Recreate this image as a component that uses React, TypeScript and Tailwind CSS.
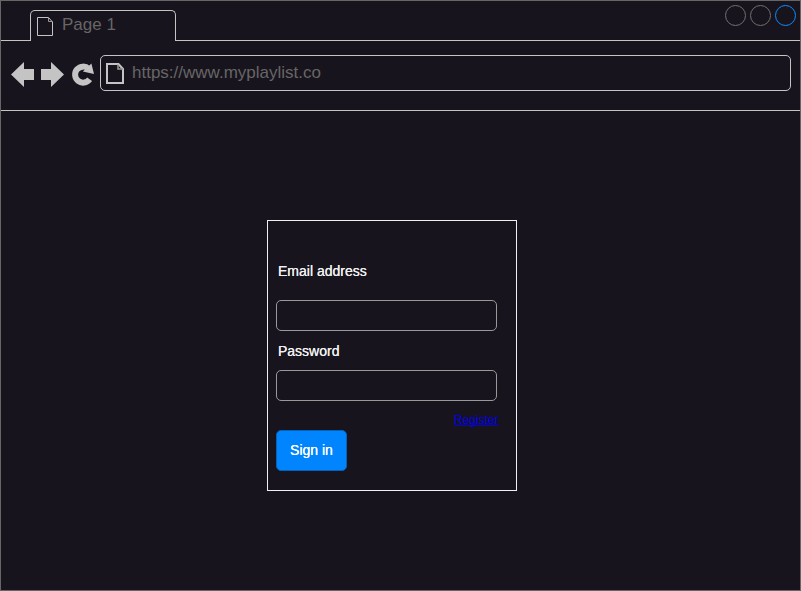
import type { ReactNode } from "react";

function PageIcon({ className, heavy }: { className: string; heavy?: boolean }) {
  return heavy ? (
    <svg className={className} viewBox="0 0 18 21" fill="none">
      <path d="M1 1H12.5L17 6V20H1Z" stroke="#c4c4c4" strokeWidth="2" />
      <path d="M12 1.5V6H17" stroke="#999" strokeWidth="1.5" />
    </svg>
  ) : (
    <svg className={className} viewBox="0 0 16 19" fill="none">
      <path d="M.5 .5H11.5L15.5 5V18.5H.5Z" stroke="#c4c4c4" />
      <path d="M11.5 .5V4.5H15.5" stroke="#999" />
    </svg>
  );
}

function Tab({ children }: { children: ReactNode }) {
  return (
    <div className="mt-[9px] flex h-[31px] w-[146px] rounded-t-[5px] border border-b-0 border-[#c4c4c4] pl-[6px]">
      <PageIcon className="mt-[6px] h-[19px] w-4" />
      <span className="ml-[9px] mt-1 text-[17px] leading-5 text-[#666]">{children}</span>
    </div>
  );
}

function Field({ label, type, className }: { label: string; type: string; className: string }) {
  return (
    <label className={`flex flex-col ${className}`}>
      <span className="pl-[2px] text-[14px] leading-4 text-[#f0f0f0] [text-shadow:0_0_0_#f0f0f0]">{label}</span>
      <input type={type} className="h-[31px] w-[221px] rounded-[5px] border border-[#999] bg-transparent px-2 text-sm text-white outline-none" />
    </label>
  );
}

export default function App() {
  return (
    <div className="flex h-[591px] w-[801px] flex-col overflow-hidden border border-[#666] bg-[#18141d] font-['Liberation_Sans',Arial,sans-serif]">
      <header className="flex h-10 shrink-0">
        <div className="w-[29px] border-b border-[#c4c4c4]" />
        <Tab>Page 1</Tab>
        <div className="flex flex-1 justify-end gap-1 border-b border-[#c4c4c4] pr-[4px] pt-[4px]">
          <span className="size-[21px] rounded-full border border-[#707070]" />
          <span className="size-[21px] rounded-full border border-[#707070]" />
          <span className="size-[21px] rounded-full border border-[#0d8dff]" />
        </div>
      </header>
      <nav className="flex h-[70px] shrink-0 border-b border-[#c4c4c4] pl-[10px] pt-[14px]">
        <svg className="mt-[7px] h-[25px] w-[83px]" viewBox="0 0 83 25" fill="#c4c4c4">
          <path d="M0 12.5L13 0V7H23V18H13V25Z" />
          <path d="M53 12.5L40 0V7H30V18H40V25Z" />
          <path d="M78.6 17.3A8 8 0 1 1 77.7 6.9" fill="none" stroke="#c4c4c4" strokeWidth="6" />
          <path d="M80.4 1.6L83 12L71.8 9.6Z" />
        </svg>
        <div className="ml-[6px] flex h-9 w-[691px] rounded-[5px] border border-[#c4c4c4] pl-[5px]">
          <PageIcon heavy className="mt-[7px] h-[21px] w-[18px]" />
          <span className="ml-2 mt-[7px] text-[17px] leading-5 text-[#666]">https://www.myplaylist.co</span>
        </div>
      </nav>
      <main className="flex-1 pl-[266px] pt-[109px]">
        <form className="flex h-[271px] w-[250px] flex-col border border-[#f0f0f0] pl-2">
          <Field label="Email address" type="email" className="mt-[42px] gap-[21px]" />
          <Field label="Password" type="password" className="mt-3 gap-[11px]" />
          <a href="#register" className="ml-[178px] mt-3 self-start text-[12px] leading-[14px] text-[#0000ee] underline decoration-1 underline-offset-1 [text-decoration-skip-ink:none]">
            Register
          </a>
          <button type="button" className="mt-[3px] h-[41px] w-[71px] rounded-[5px] border border-[#0662b8] bg-[#0085ff] pb-[2px] text-[14px] leading-4 text-white [text-shadow:0_0_0_#fff]">
            Sign in
          </button>
        </form>
      </main>
    </div>
  );
}
